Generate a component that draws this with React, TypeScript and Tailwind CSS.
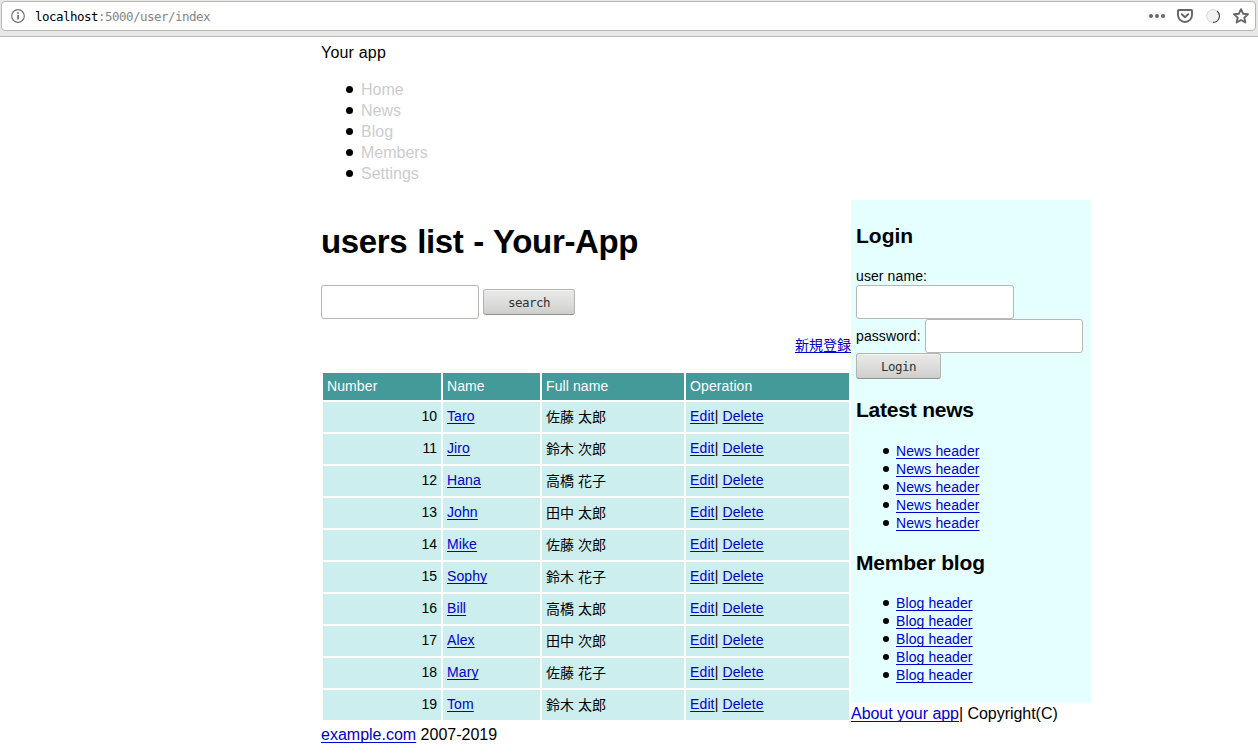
import type { ReactNode } from "react";

const navItems = ["Home", "News", "Blog", "Members", "Settings"];

const users: [number, string, string][] = [
  [10, "Taro", "佐藤 太郎"],
  [11, "Jiro", "鈴木 次郎"],
  [12, "Hana", "高橋 花子"],
  [13, "John", "田中 太郎"],
  [14, "Mike", "佐藤 次郎"],
  [15, "Sophy", "鈴木 花子"],
  [16, "Bill", "高橋 太郎"],
  [17, "Alex", "田中 次郎"],
  [18, "Mary", "佐藤 花子"],
  [19, "Tom", "鈴木 太郎"],
];

function Link({ children }: { children: ReactNode }) {
  return (
    <a
      href="#"
      className="text-[#0000cc] underline decoration-1 underline-offset-2 [text-decoration-skip-ink:none]"
    >
      {children}
    </a>
  );
}

function Button({ label, className }: { label: string; className: string }) {
  return (
    <button
      className={`h-[26px] rounded-[3px] border border-[#b4b4b0] border-b-[#91918c] bg-linear-to-b from-[#e9e9e8] via-[#dededc] to-[#cececc] pt-px font-['DejaVu_Sans_Mono',monospace] text-[12.5px] leading-[23px] tracking-[-0.525px] text-[#2e3436] shadow-[inset_0_1px_0_#f4f4f3] ${className}`}
    >
      {label}
    </button>
  );
}

function Field({ type = "text" }: { type?: string }) {
  return (
    <input
      type={type}
      className="block h-[34px] w-[158px] shrink-0 rounded-[3px] border border-[#b6b6b3] bg-white px-2 outline-none"
    />
  );
}

function LinkList({ label }: { label: string }) {
  return (
    <ul className="pl-[27px] tracking-[0.1px]">
      {[0, 1, 2, 3, 4].map((i) => (
        <li key={i} className="flex h-[18px] items-center gap-[7px] leading-[18px]">
          <span className="size-[6px] rounded-full bg-black" />
          <Link>{label}</Link>
        </li>
      ))}
    </ul>
  );
}

function AddressBar() {
  return (
    <header className="h-[37px] border-b border-[#b6b6b3] bg-[#e8e8e7] px-px pt-px">
      <div className="flex h-[30px] w-[1255px] items-center rounded-[4px] border border-[#b6b6b3] bg-white pr-[6px] pl-[9px]">
        <svg width="14" height="14" viewBox="0 0 14 14" fill="none" stroke="#737373">
          <circle cx="7" cy="7" r="6.3" strokeWidth="1.2" />
          <path d="M7 6v4.5" strokeWidth="1.8" />
          <circle cx="7" cy="3.9" r="1" fill="#737373" stroke="none" />
        </svg>
        <div className="ml-[10px] flex-1 pt-[2px] font-['DejaVu_Sans_Mono',monospace] text-[12.5px] tracking-[-0.525px] text-[#858585]">
          <span className="text-black">localhost</span>:5000/user/index
        </div>
        <div className="flex items-center">
          <svg width="16" height="16" viewBox="0 0 16 16" fill="#666">
            <circle cx="2" cy="8" r="2" />
            <circle cx="8" cy="8" r="2" />
            <circle cx="14" cy="8" r="2" />
          </svg>
          <svg className="ml-[12px]" width="16" height="16" viewBox="0 0 16 16" fill="none" stroke="#666" strokeWidth="1.9" strokeLinecap="round" strokeLinejoin="round">
            <path d="M1.6 2h12.8a.6.6 0 0 1 .6.6V7a7 7 0 0 1-14 0V2.6a.6.6 0 0 1 .6-.6z" />
            <path d="M4.8 6.2L8 9.3l3.2-3.1" />
          </svg>
          <svg className="ml-[12px]" width="16" height="16" viewBox="0 0 16 16" fill="none">
            <circle cx="8" cy="8" r="6.4" fill="#f2f2f2" stroke="#bdbdbd" strokeWidth="0.6" />
            <path d="M12 3a6.4 6.4 0 0 1-4 11.4" stroke="#444" strokeWidth="1.1" />
          </svg>
          <svg className="ml-[12px]" width="16" height="16" viewBox="0 0 16 16" fill="none" stroke="#666" strokeWidth="1.9" strokeLinejoin="round">
            <path d="M8 1.2l2.05 4.5 4.95.55-3.7 3.35 1.05 4.9L8 12l-4.35 2.5L4.7 9.6 1 6.25l4.95-.55z" />
          </svg>
        </div>
      </div>
    </header>
  );
}

export default function App() {
  return (
    <div className="h-[754px] w-[1258px] overflow-hidden bg-white font-['Liberation_Sans','Noto_Sans_CJK_JP',sans-serif] text-base text-black">
      <AddressBar />
      <div className="ml-[321px] w-[770px] pt-[5px]">
        <div className="h-[21px] leading-[21px] tracking-[0.2px]">Your app</div>
        <ul className="my-4 pl-[25px]">
          {navItems.map((n) => (
            <li key={n} className="flex h-[21px] items-center gap-2 leading-[21px]">
              <span className="size-[7px] rounded-full bg-black" />
              <a href="#" className="text-[#cccccc]">{n}</a>
            </li>
          ))}
        </ul>
        <div className="flex items-start">
          <main className="w-[530px] text-[14px]">
            <h1 className="flex h-[85px] items-center pb-px text-[33px] leading-[42px] font-bold tracking-[-0.35px] whitespace-nowrap [word-spacing:1px]">
              users list - Your-App
            </h1>
            <div className="flex items-center gap-1">
              <Field />
              <Button label="search" className="w-[92px]" />
            </div>
            <div className="mt-4 h-[21px] text-right leading-[21px]">
              <Link>新規登録</Link>
            </div>
            <table className="mt-[15px] w-[530px] table-fixed border-separate border-spacing-[2px]">
              <colgroup>
                <col className="w-[118px]" />
                <col className="w-[97px]" />
                <col className="w-[142px]" />
                <col className="w-[163px]" />
              </colgroup>
              <thead>
                <tr className="h-[27px] bg-[#449999] text-left text-white">
                  {["Number", "Name", "Full name", "Operation"].map((h) => (
                    <th key={h} className="px-1 pt-0 pb-[2px] font-normal leading-[18px] tracking-[0.1px]">{h}</th>
                  ))}
                </tr>
              </thead>
              <tbody>
                {users.map(([id, name, full]) => (
                  <tr key={id} className="h-[30px] bg-[#cceeee] leading-[18px]">
                    <td className="px-1 pt-0 pb-[2px] text-right">{id}</td>
                    <td className="px-1 pt-0 pb-[2px] tracking-[0.1px]"><Link>{name}</Link></td>
                    <td className="px-1 py-0">{full}</td>
                    <td className="px-1 pt-0 pb-[2px] tracking-[0.13px]">
                      <Link>Edit</Link>| <Link>Delete</Link>
                    </td>
                  </tr>
                ))}
              </tbody>
            </table>
            <footer className="mt-[2px] h-[21px] text-base leading-[21px]">
              <Link>example.com</Link> 2007-2019
            </footer>
          </main>
          <div className="w-[240px]">
            <aside className="h-[503px] bg-[#e5ffff] pl-[5px] text-[14px]">
              <h2 className="flex h-[67px] items-center pt-[3px] text-[21px] leading-[27px] font-bold">Login</h2>
              <div className="h-[18px] leading-[18px] tracking-[0.1px]">user name:</div>
              <Field />
              <div className="flex items-center gap-1">
                <span className="w-[65px] tracking-[0.1px]">password:</span>
                <Field type="password" />
              </div>
              <Button label="Login" className="block w-[85px]" />
              <h2 className="flex h-[63px] items-center pb-[2px] text-[21px] leading-[27px] font-bold tracking-[-0.22px]">Latest news</h2>
              <LinkList label="News header" />
              <h2 className="flex h-[62px] items-center pb-[2px] text-[21px] leading-[27px] font-bold tracking-[-0.17px]">Member blog</h2>
              <LinkList label="Blog header" />
            </aside>
            <div className="h-[21px] leading-[21px] tracking-[-0.04px]">
              <Link>About your app</Link>| Copyright(C)
            </div>
          </div>
        </div>
      </div>
    </div>
  );
}
